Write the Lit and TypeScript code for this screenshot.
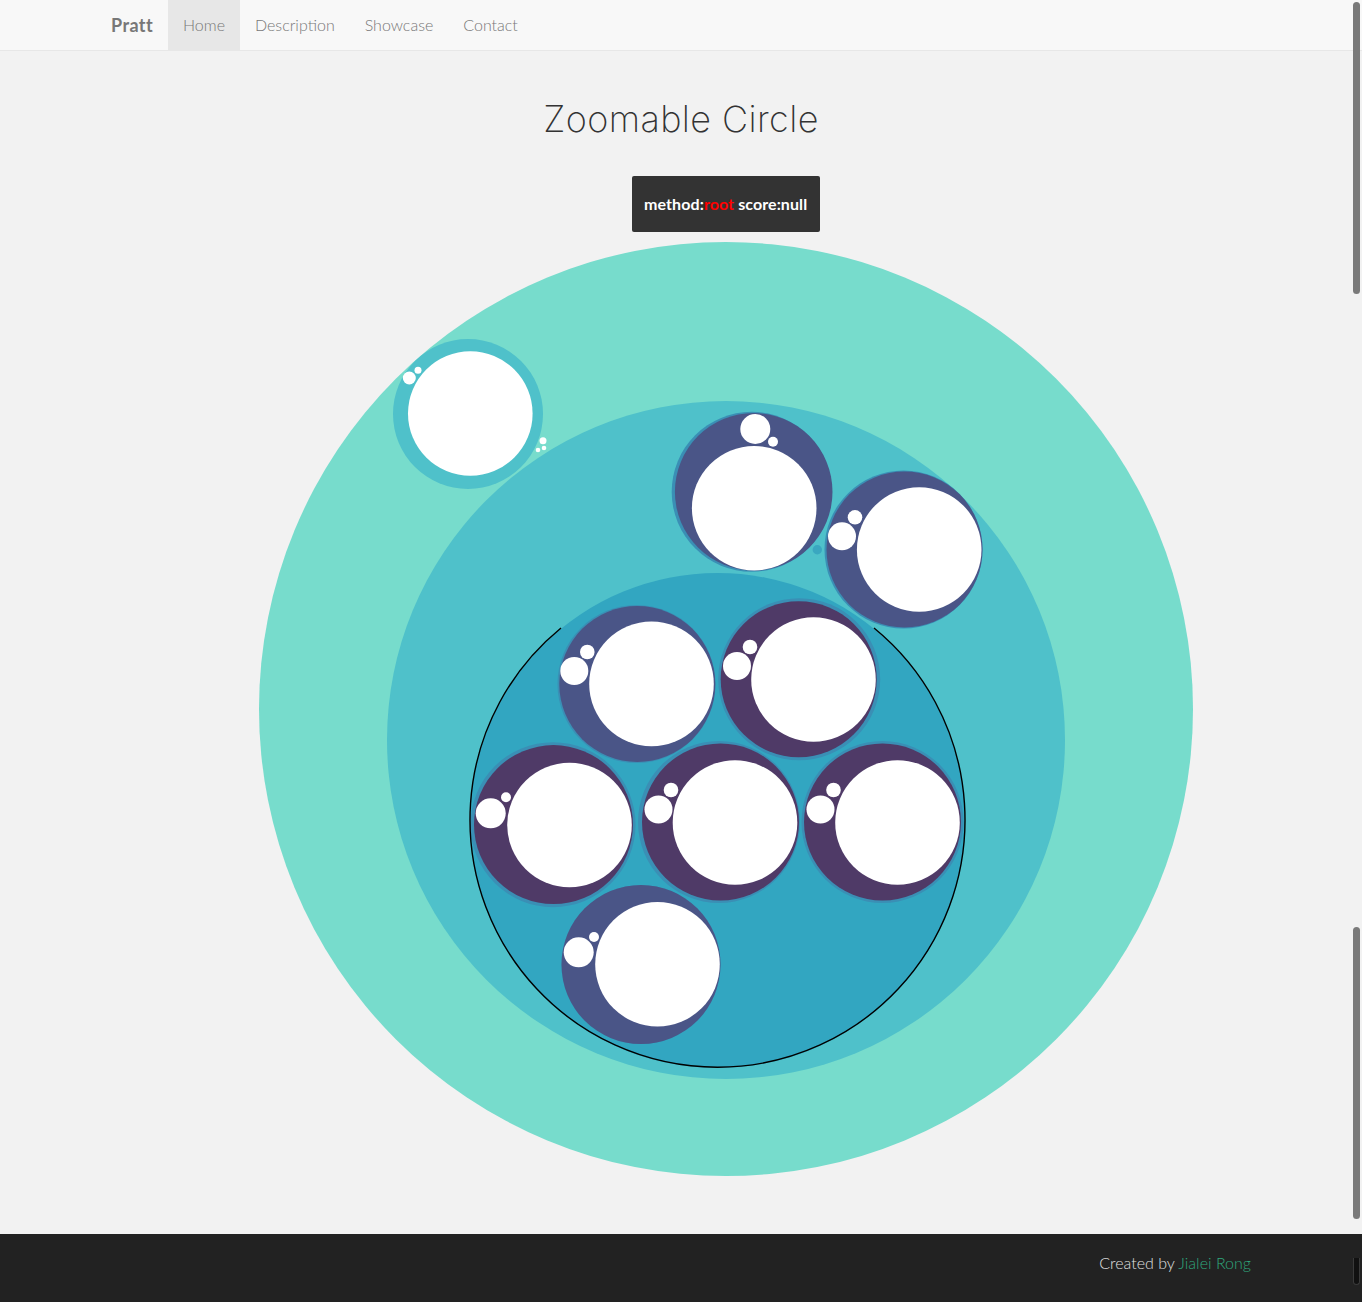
import { css, html, svg, LitElement } from 'lit';
import { customElement } from 'lit/decorators.js';

type Dot = [number, number, number];

interface Bubble {
  ring: [number, number, number];
  body: [number, number, number];
  fill: string;
  white: Dot;
  dots: Dot[];
}

const BLUE = '#4a5587';
const PURPLE = '#4f3a67';
const RING = '#3a8fb5';

const BUBBLES: Bubble[] = [
  { ring: [751.7, 491.8, 80], body: [753.7, 491.8, 78.8], fill: BLUE, white: [754.2, 508.2, 62.3], dots: [[755.3, 429, 15], [773, 441.7, 5]] },
  { ring: [903.5, 549.5, 79], body: [904.5, 549.5, 78], fill: BLUE, white: [919.2, 549.5, 62.3], dots: [[842, 536.3, 14], [855, 517.3, 7.3]] },
  { ring: [636.5, 684, 79], body: [637.3, 684, 78], fill: BLUE, white: [651.5, 683.9, 62.3], dots: [[574.3, 671, 14], [587.3, 652, 7.3]] },
  { ring: [799.2, 679.2, 81], body: [798.7, 679.2, 78], fill: PURPLE, white: [813.5, 679.5, 62.3], dots: [[737, 666, 14], [750, 647, 7.3]] },
  { ring: [553, 824.7, 82.5], body: [553.5, 824.6, 79.5], fill: PURPLE, white: [569.5, 825, 62.3], dots: [[490.7, 813.3, 15], [506, 797.3, 5]] },
  { ring: [719, 822, 81], body: [720.5, 822, 78.5], fill: PURPLE, white: [735, 822.5, 62.3], dots: [[658.5, 809.5, 14], [671, 790, 7.3]] },
  { ring: [882.5, 822, 81], body: [882.5, 822, 78.5], fill: PURPLE, white: [897.5, 822.5, 62.3], dots: [[820.5, 809.5, 14], [833.5, 790, 7.3]] },
  { ring: [641, 964.5, 79.5], body: [641, 964.5, 79.5], fill: BLUE, white: [657.5, 964.3, 62.3], dots: [[578.7, 952.3, 15], [594, 937, 5]] },
];

const LOOSE_DOTS: Dot[] = [
  [409.3, 378, 6.5],
  [418, 370.3, 3.5],
  [543, 440.7, 3.5],
  [544, 448, 2.3],
  [538, 450, 2.3],
];

const circle = ([cx, cy, r]: Dot, fill: string) =>
  svg`<circle cx=${cx} cy=${cy} r=${r} fill=${fill}></circle>`;

@customElement('app-root')
export class AppRoot extends LitElement {
  static override styles = css`
    :host {
      display: block;
      font-family: 'Lato', 'Liberation Sans', sans-serif;
    }
    .page {
      position: relative;
      display: flex;
      flex-direction: column;
      height: 1302px;
      overflow: hidden;
      background: #f2f2f2;
    }
    .navbar {
      display: flex;
      height: 50px;
      padding-left: 96px;
      flex-shrink: 0;
      background: #f8f8f8;
      border-bottom: 1px solid #e7e7e7;
    }
    .brand {
      padding: 0 15px;
      font-size: 18px;
      font-weight: 700;
      letter-spacing: 0.4px;
      line-height: 50px;
      color: #777;
    }
    .navlink {
      padding: 0 15px;
      font-size: 16px;
      font-weight: 300;
      line-height: 50px;
      color: #777;
    }
    .navlink.active {
      background: #e7e7e7;
    }
    main {
      flex: 1;
      display: flex;
      flex-direction: column;
    }
    h1 {
      margin: 48px 0 0;
      font-family: 'Inter', 'Lato', sans-serif;
      font-size: 36px;
      font-weight: 200;
      letter-spacing: 0.4px;
      line-height: 40px;
      text-align: center;
      color: #333;
    }
    .tip {
      align-self: flex-start;
      margin: 37px 0 0 632px;
      padding: 0 13px 0 12px;
      height: 56px;
      line-height: 55px;
      font-size: 16px;
      font-weight: 700;
      letter-spacing: 0.09px;
      color: #fff;
      background: #333;
      border-radius: 2px;
    }
    .tip .method {
      color: #f00;
    }
    .chart {
      display: block;
      margin-top: 10px;
      width: 1362px;
      height: 934px;
    }
    footer {
      flex-shrink: 0;
      height: 68px;
      padding-right: 111px;
      box-sizing: border-box;
      font-size: 16px;
      font-weight: 300;
      line-height: 58px;
      text-align: right;
      color: #e0e0e0;
      background: #222;
    }
    footer a {
      color: #2fa67c;
      text-decoration: none;
    }
    .thumb {
      position: absolute;
      left: 1353px;
      width: 7px;
      border-radius: 4px;
      background: #7a7a7a;
    }
    .thumb.first {
      top: 2px;
      height: 292px;
    }
    .thumb.second {
      top: 927px;
      height: 292px;
    }
    .thumb.dark {
      top: 1258px;
      height: 27px;
      background: #111;
      border: 1px solid #3a3a3a;
      border-top: 0;
      box-sizing: border-box;
      border-radius: 0 0 4px 4px;
    }
  `;

  private renderChart() {
    return html`
      <svg class="chart" viewBox="0 242 1362 934">
        ${circle([726, 709, 467], '#77dccc')}
        ${circle([726, 740, 339], '#4fc1ca')}
        ${circle([468, 414, 75], '#4fc1ca')}
        ${circle([470.3, 413.5, 62.3], '#fff')}
        ${LOOSE_DOTS.map((d) => circle(d, '#fff'))}
        ${circle([717.5, 820.5, 247.5], '#32a6c1')}
        ${circle([817.3, 549.7, 4.7], '#3aa7c0')}
        ${BUBBLES.map(
          (b) => svg`
            ${circle(b.ring, RING)}
            ${circle(b.body, b.fill)}
            ${circle(b.white, '#fff')}
            ${b.dots.map((d) => circle(d, '#fff'))}
          `,
        )}
        ${svg`<path d="M561 628A247.5 247.5 0 1 0 874 628" fill="none" stroke="#000" stroke-width="1.4"></path>`}
      </svg>
    `;
  }

  override render() {
    return html`
      <div class="page">
        <nav class="navbar">
          <span class="brand">Pratt</span>
          <span class="navlink active">Home</span>
          <span class="navlink">Description</span>
          <span class="navlink">Showcase</span>
          <span class="navlink">Contact</span>
        </nav>
        <main>
          <h1>Zoomable Circle</h1>
          <div class="tip">method:<span class="method">root</span> score:null</div>
          ${this.renderChart()}
        </main>
        <footer>Created by <a href="#">Jialei Rong</a></footer>
        <div class="thumb first"></div>
        <div class="thumb second"></div>
        <div class="thumb dark"></div>
      </div>
    `;
  }
}

declare global {
  interface HTMLElementTagNameMap {
    'app-root': AppRoot;
  }
}
